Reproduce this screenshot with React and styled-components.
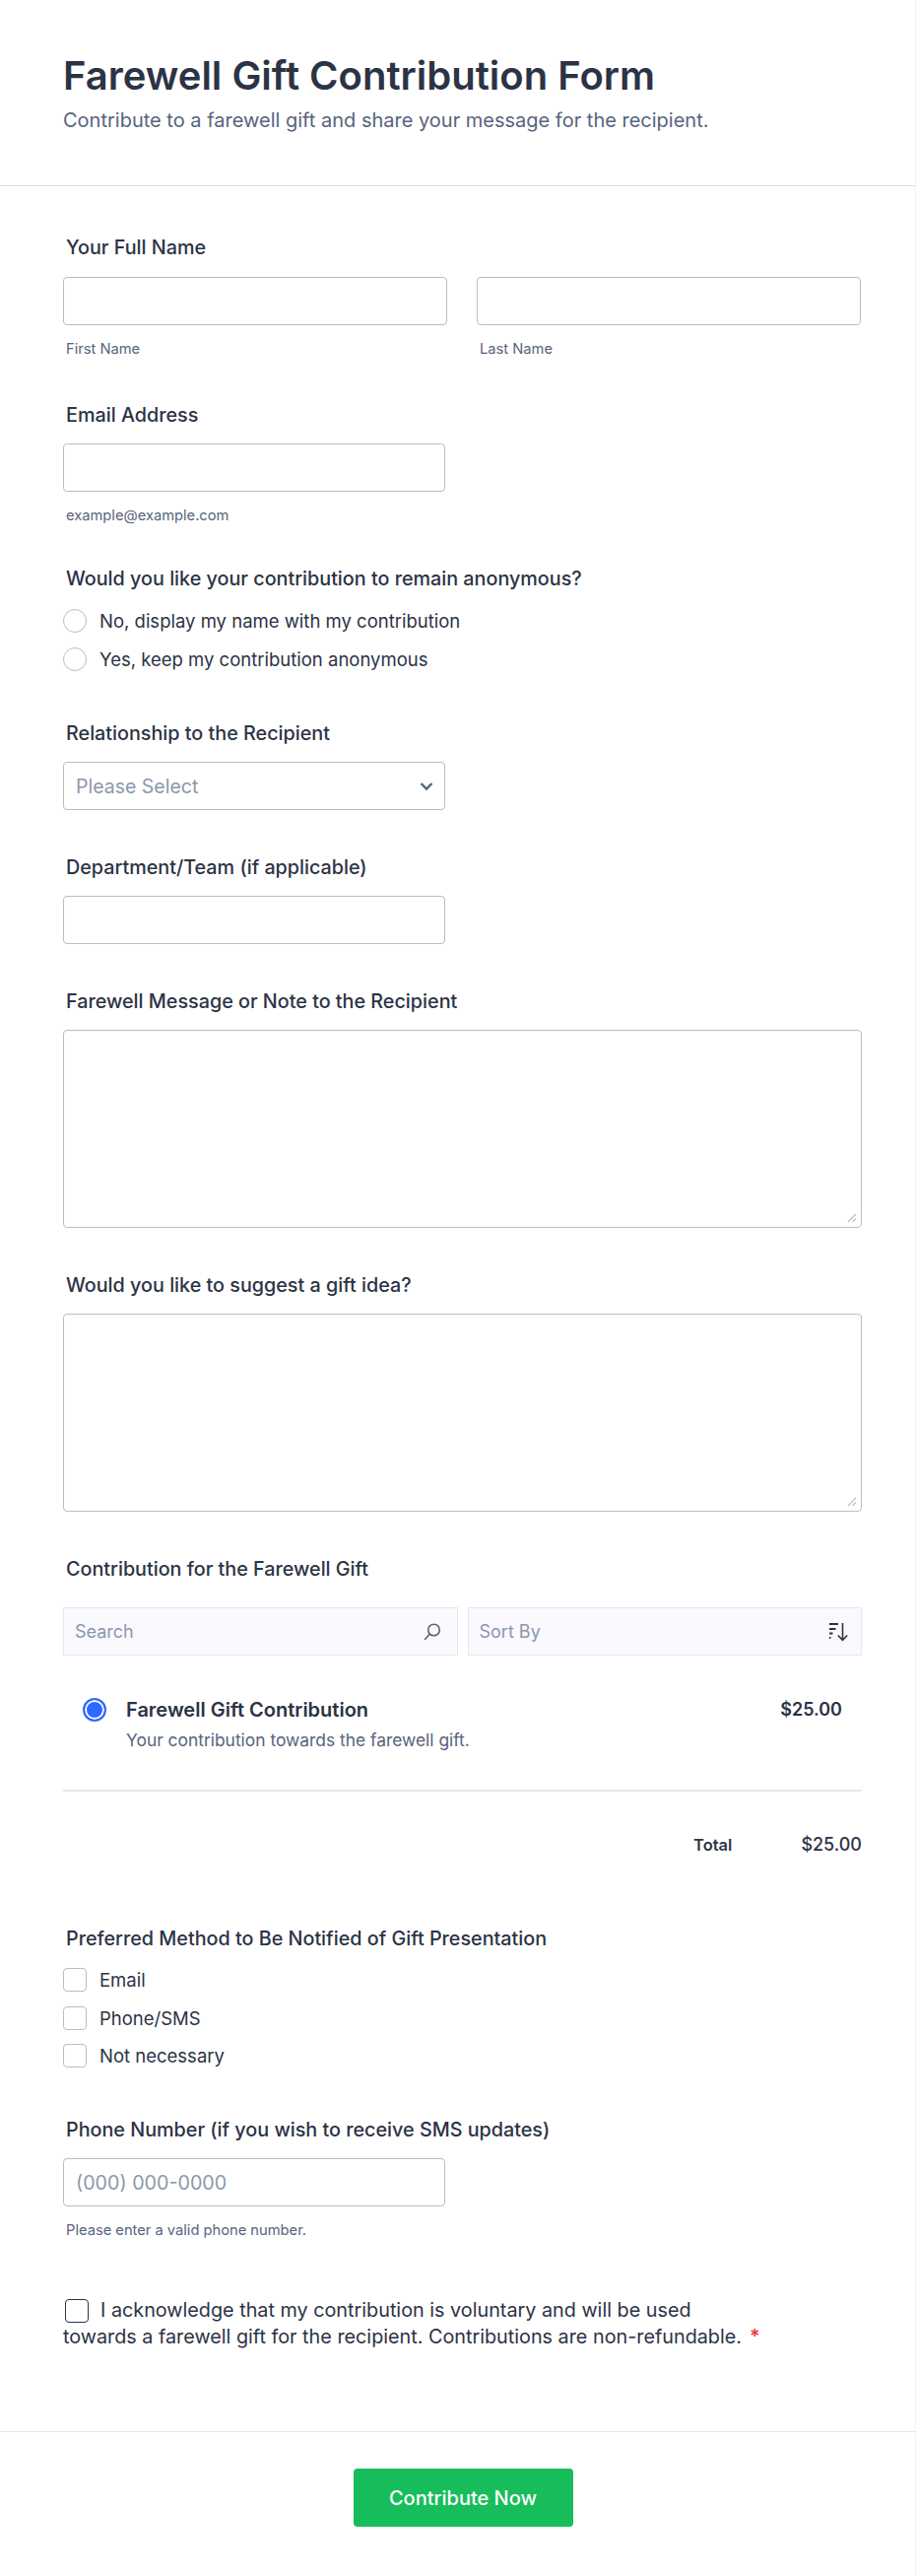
import React from 'react';
import styled, { createGlobalStyle } from 'styled-components';

const GlobalStyle = createGlobalStyle`
  * { box-sizing: border-box; }
  html, body { margin: 0; padding: 0; background: #fff; }
  body { font-family: Inter, "Noto Sans", sans-serif; color: #2c3345; }
`;

const Page = styled.div`
  width: 930px;
  height: 2614px;
  display: flex;
  flex-direction: column;
  background: #fff;
  border-right: 1px solid #f3f3f7;
`;

const Header = styled.header`
  height: 189px;
  padding: 52px 64px 0;
  border-bottom: 1px solid #dcdde6;
`;

const Title = styled.h1`
  margin: 0;
  font-size: 40px;
  line-height: 50px;
  font-weight: 600;
  color: #2c3345;
`;

const Subtitle = styled.p`
  margin: 7px 0 0;
  font-size: 20px;
  line-height: 26px;
  color: #57647e;
`;

const Body = styled.main`
  flex: 1;
  padding: 50px 54px 0 64px;
  display: flex;
  flex-direction: column;
`;

const Field = styled.section`
  margin-top: ${({ $top }) => $top ?? 46}px;
  &:first-child { margin-top: 0; }
`;

const Label = styled.div`
  padding-left: 3px;
  margin-bottom: ${({ $bottom }) => $bottom ?? 17}px;
  font-size: 19.75px;
  line-height: 24px;
  font-weight: 500;
  color: #2c3345;
`;

const Row = styled.div`
  display: flex;
  gap: 30px;
`;

const Cell = styled.div`
  width: 390px;
`;

const Input = styled.input`
  display: block;
  width: ${({ $width }) => $width ?? 388}px;
  height: 49px;
  padding: 0 12px;
  border: 1px solid #b8bdc9;
  border-radius: 4px;
  background: #fff;
  font: 400 19.7px Inter, sans-serif;
  color: #2c3345;
  &::placeholder { color: #8d97ab; opacity: 1; }
`;

const Hint = styled.div`
  margin-top: 15px;
  padding-left: 3px;
  font-size: 14.7px;
  line-height: 18px;
  color: #57647e;
`;

const OptionList = styled.div`
  display: flex;
  flex-direction: column;
  gap: ${({ $gap }) => $gap}px;
`;

const Option = styled.label`
  display: flex;
  align-items: center;
  gap: 13px;
  font-size: 18.5px;
  line-height: 24px;
  color: #2c3345;
`;

const Radio = styled.input.attrs({ type: 'radio' })`
  appearance: none;
  flex: none;
  width: 24px;
  height: 24px;
  margin: 0;
  border: 1px solid #b8bdc9;
  border-radius: 50%;
  background: #fff;
  &:checked {
    border: 2px solid #2e69ff;
    background: #2e69ff;
    box-shadow: inset 0 0 0 2px #fff;
  }
`;

const Check = styled.input.attrs({ type: 'checkbox' })`
  appearance: none;
  flex: none;
  width: 24px;
  height: 24px;
  margin: 0;
  border: 1px solid #b8bdc9;
  border-radius: 4px;
  background: #fff;
`;

const SelectWrap = styled.div`
  position: relative;
  width: 388px;
  & > svg {
    position: absolute;
    top: 20px;
    right: 12px;
    pointer-events: none;
  }
`;

const Select = styled.select`
  display: block;
  width: 100%;
  height: 49px;
  padding: 0 12px;
  appearance: none;
  border: 1px solid #b8bdc9;
  border-radius: 4px;
  background: #fff;
  font: 400 19.5px Inter, sans-serif;
  color: #8d97ab;
`;

const AreaWrap = styled.div`
  position: relative;
  width: 811px;
  & > svg {
    position: absolute;
    right: 5px;
    bottom: 5px;
    pointer-events: none;
  }
`;

const TextArea = styled.textarea`
  display: block;
  width: 100%;
  height: 201px;
  resize: none;
  border: 1px solid #b8bdc9;
  border-radius: 4px;
  background: #fff;
`;

const Toolbar = styled.div`
  display: flex;
  gap: 10px;
`;

const ToolBox = styled.div`
  flex: 1;
  height: 49px;
  padding: 0 11px;
  display: flex;
  align-items: center;
  justify-content: space-between;
  border: 1px solid #e3e8f0;
  background: #f9f9fe;
  font-size: 18px;
  color: #8d97ab;
  & > input {
    width: 300px;
    padding: 0;
    border: 0;
    outline: 0;
    background: transparent;
    font: 400 18px Inter, sans-serif;
  }
  & > input::placeholder { color: #8d97ab; opacity: 1; }
`;

const SearchSvg = styled.svg`
  margin-right: 4px;
`;

const Product = styled.div`
  height: 138px;
  padding: 43px 20px 0;
  display: flex;
  align-items: flex-start;
  gap: 20px;
  border-bottom: 2px solid #e3e8f0;
`;

const ProductText = styled.div`
  flex: 1;
`;

const ProductName = styled.div`
  font-size: 20px;
  line-height: 24px;
  font-weight: 600;
  color: #2c3345;
`;

const ProductDesc = styled.div`
  margin-top: 8px;
  font-size: 17.4px;
  line-height: 22px;
  color: #57647e;
`;

const Price = styled.div`
  font-size: 18px;
  line-height: 24px;
  font-weight: ${({ $weight }) => $weight ?? 600};
  color: #2c3345;
`;

const TotalRow = styled.div`
  margin-top: 42px;
  display: flex;
  justify-content: flex-end;
  align-items: center;
  gap: 70px;
`;

const TotalLabel = styled.div`
  font-size: 16.5px;
  line-height: 24px;
  font-weight: 600;
  color: #2c3345;
`;

const Consent = styled.div`
  margin-top: 59px;
  font-size: 19.8px;
  line-height: 27px;
  color: #2c3345;
`;

const ConsentCheck = styled(Check)`
  display: inline-block;
  margin: 0 12px 0 2px;
  vertical-align: -6px;
  border-color: #2c3345;
`;

const Star = styled.span`
  margin-left: 8px;
  color: #f23a3c;
  font-weight: 600;
`;

const Footer = styled.footer`
  height: 147px;
  padding: 37px 0 0 11px;
  display: flex;
  justify-content: center;
  align-items: flex-start;
  border-top: 1px solid #e3e5ec;
`;

const Submit = styled.button`
  width: 223px;
  height: 59px;
  border: 0;
  border-radius: 4px;
  background: #18bd5b;
  color: #fff;
  font: 500 20px Inter, sans-serif;
`;

const Chevron = () => (
  <svg width="14" height="10" viewBox="0 0 14 10" fill="none">
    <path d="M1.5 2 7 7.5 12.5 2" stroke="#57647e" strokeWidth="2.4" />
  </svg>
);

const Grip = () => (
  <svg width="10" height="10" viewBox="0 0 10 10" fill="none" stroke="#b8bdc9" strokeWidth="1.2">
    <path d="M1 9 9 1M5.5 9 9 5.5" />
  </svg>
);

const SearchIcon = () => (
  <SearchSvg width="20" height="20" viewBox="0 0 20 20" fill="none" stroke="#57647e" strokeWidth="1.6">
    <circle cx="11.5" cy="8" r="5.8" />
    <path d="M7.3 12.2 2.5 17.5" strokeLinecap="round" />
  </SearchSvg>
);

const SortIcon = () => (
  <svg width="22" height="22" viewBox="0 0 22 22" fill="none" stroke="#2c3345">
    <path d="M1 3h9M1 8h6.5M1 12.5h3.5M1 17h1.5" strokeWidth="2" />
    <path d="M14.5 2v17M9.8 14.5l4.7 4.8 4.7-4.8" strokeWidth="1.6" />
  </svg>
);

export default function App() {
  return (
    <Page>
      <GlobalStyle />
      <Header>
        <Title>Farewell Gift Contribution Form</Title>
        <Subtitle>Contribute to a farewell gift and share your message for the recipient.</Subtitle>
      </Header>
      <Body>
        <Field>
          <Label $bottom={18}>Your Full Name</Label>
          <Row>
            <Cell>
              <Input $width={390} />
              <Hint>First Name</Hint>
            </Cell>
            <Cell>
              <Input $width={390} />
              <Hint>Last Name</Hint>
            </Cell>
          </Row>
        </Field>
        <Field>
          <Label>Email Address</Label>
          <Input />
          <Hint>example@example.com</Hint>
        </Field>
        <Field $top={43}>
          <Label $bottom={19}>Would you like your contribution to remain anonymous?</Label>
          <OptionList $gap={15}>
            <Option><Radio name="anon" />No, display my name with my contribution</Option>
            <Option><Radio name="anon" />Yes, keep my contribution anonymous</Option>
          </OptionList>
        </Field>
        <Field $top={51}>
          <Label>Relationship to the Recipient</Label>
          <SelectWrap>
            <Select defaultValue="">
              <option value="">Please Select</option>
            </Select>
            <Chevron />
          </SelectWrap>
        </Field>
        <Field>
          <Label>Department/Team (if applicable)</Label>
          <Input />
        </Field>
        <Field>
          <Label>Farewell Message or Note to the Recipient</Label>
          <AreaWrap>
            <TextArea />
            <Grip />
          </AreaWrap>
        </Field>
        <Field>
          <Label>Would you like to suggest a gift idea?</Label>
          <AreaWrap>
            <TextArea />
            <Grip />
          </AreaWrap>
        </Field>
        <Field>
          <Label $bottom={27}>Contribution for the Farewell Gift</Label>
          <Toolbar>
            <ToolBox>
              <input placeholder="Search" />
              <SearchIcon />
            </ToolBox>
            <ToolBox>
              Sort By
              <SortIcon />
            </ToolBox>
          </Toolbar>
          <Product>
            <Radio name="product" defaultChecked />
            <ProductText>
              <ProductName>Farewell Gift Contribution</ProductName>
              <ProductDesc>Your contribution towards the farewell gift.</ProductDesc>
            </ProductText>
            <Price>$25.00</Price>
          </Product>
          <TotalRow>
            <TotalLabel>Total</TotalLabel>
            <Price $weight={500}>$25.00</Price>
          </TotalRow>
        </Field>
        <Field $top={71}>
          <Label $bottom={18}>Preferred Method to Be Notified of Gift Presentation</Label>
          <OptionList $gap={14.5}>
            <Option><Check />Email</Option>
            <Option><Check />Phone/SMS</Option>
            <Option><Check />Not necessary</Option>
          </OptionList>
        </Field>
        <Field $top={51}>
          <Label>Phone Number (if you wish to receive SMS updates)</Label>
          <Input placeholder="(000) 000-0000" />
          <Hint>Please enter a valid phone number.</Hint>
        </Field>
        <Consent>
          <ConsentCheck />
          I acknowledge that my contribution is voluntary and will be used
          <br />
          towards a farewell gift for the recipient. Contributions are non-refundable.
          <Star>*</Star>
        </Consent>
      </Body>
      <Footer>
        <Submit>Contribute Now</Submit>
      </Footer>
    </Page>
  );
}
